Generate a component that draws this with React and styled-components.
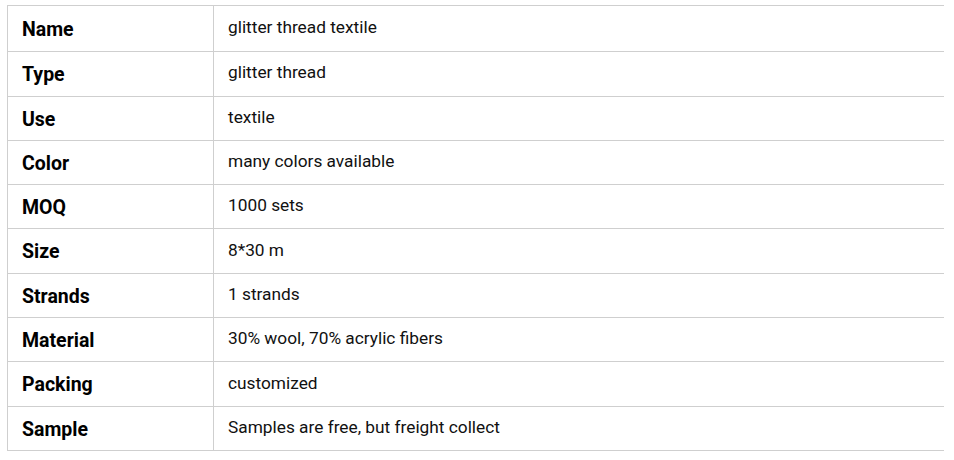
import React from "react";
import styled, { createGlobalStyle } from "styled-components";

const Global = createGlobalStyle`
  body {
    margin: 0;
    background: #fff;
    font-family: Roboto, "Liberation Sans", sans-serif;
  }
`;

const Wrapper = styled.div`
  padding: 5px 10px 0 7px;
`;

const Table = styled.table`
  width: 937px;
  border-collapse: collapse;
  border-left: 1px solid #cfcfcf;
`;

const Row = styled.tr`
  border-top: 1px solid #cfcfcf;
  border-bottom: 1px solid #cfcfcf;

  &:first-child th {
    padding-top: 12px;
    padding-bottom: 10px;
  }
`;

const Label = styled.th`
  width: 177px;
  padding: 11px 14px 9px 14px;
  line-height: 23.3px;
  text-align: left;
  vertical-align: middle;
  font-size: 19.5px;
  font-weight: 700;
  color: #000;
  border-right: 1px solid #cfcfcf;
`;

const Value = styled.td`
  padding: 0 14px 3px 14px;
  line-height: 20px;
  vertical-align: middle;
  font-size: 17.3px;
  color: #111;
`;

const specs = [
  ["Name", "glitter thread textile"],
  ["Type", "glitter thread"],
  ["Use", "textile"],
  ["Color", "many colors available"],
  ["MOQ", "1000 sets"],
  ["Size", "8*30 m"],
  ["Strands", "1 strands"],
  ["Material", "30% wool, 70% acrylic fibers"],
  ["Packing", "customized"],
  ["Sample", "Samples are free, but freight collect"],
];

const App = () => (
  <Wrapper>
    <Global />
    <Table>
      <tbody>
        {specs.map(([label, value]) => (
          <Row key={label}>
            <Label>{label}</Label>
            <Value>{value}</Value>
          </Row>
        ))}
      </tbody>
    </Table>
  </Wrapper>
);

export default App;
